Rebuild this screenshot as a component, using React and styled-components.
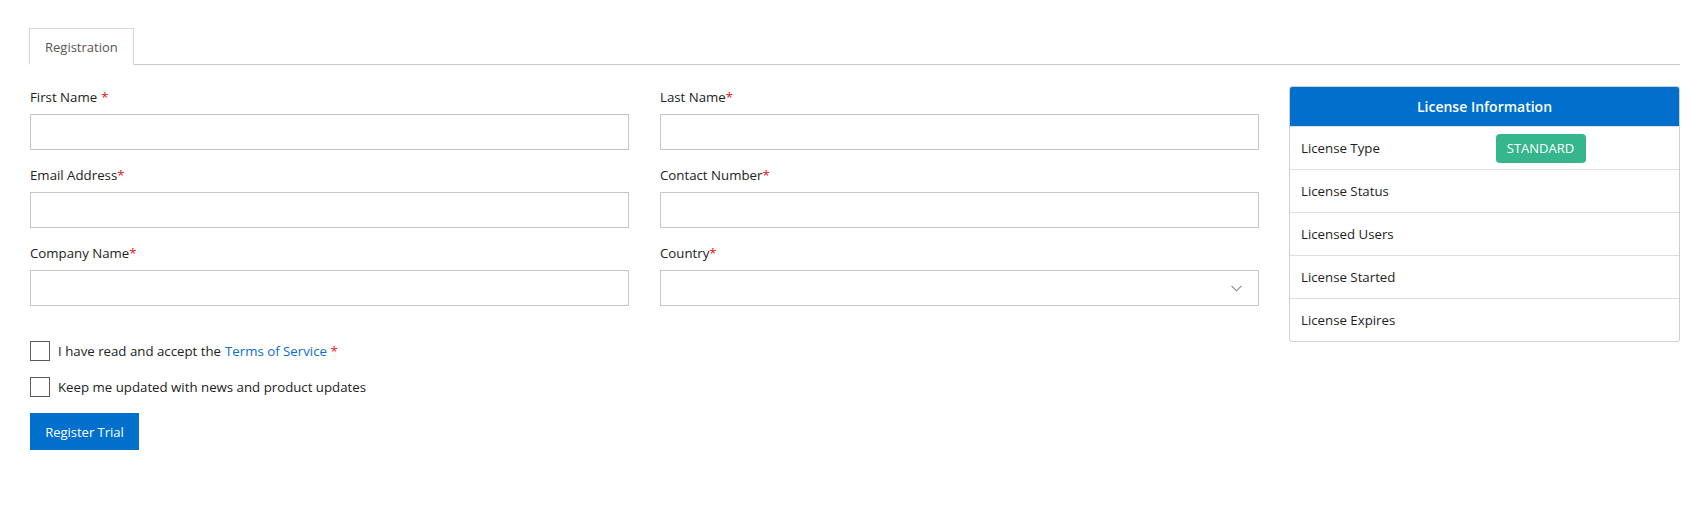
import styled, { createGlobalStyle } from 'styled-components';

const GlobalStyle = createGlobalStyle`
  * { box-sizing: border-box; }
  body {
    margin: 0;
    font-family: "Open Sans", "Noto Sans", Arial, sans-serif;
    font-size: 13.25px;
    color: #212121;
    background: #fff;
  }
`;

const Page = styled.div`
  padding: 28px 27px 40px 29px;
`;

const TabBar = styled.div`
  display: flex;
  border-bottom: 1px solid #c9c9c9;
`;

const Tab = styled.div`
  height: 37px;
  margin-bottom: -1px;
  padding: 0 15px;
  display: flex;
  align-items: center;
  border: 1px solid #d6d6d6;
  border-bottom-color: #fff;
  background: #fff;
  color: #555;
  font-size: 13px;
`;

const Content = styled.div`
  display: grid;
  grid-template-columns: 1fr 391px;
  gap: 30px;
  margin-top: 22px;
  padding-left: 1px;
`;

const FormGrid = styled.div`
  display: grid;
  grid-template-columns: 1fr 1fr;
  column-gap: 31px;
  row-gap: 15px;
`;

const Field = styled.div`
  display: flex;
  flex-direction: column;
  gap: 7px;
`;

const Label = styled.label`
  line-height: 20px;
  color: #222;
`;

const Req = styled.span`
  color: #e4141b;
  margin-left: ${(p) => (p.$spaced ? '4px' : '0')};
`;

const Input = styled.input`
  height: 36px;
  width: 100%;
  border: 1px solid #c6c6c6;
  padding: 0 10px;
  font: inherit;
  outline: none;
`;

const SelectWrap = styled.div`
  position: relative;
  height: 36px;
  border: 1px solid #c6c6c6;
`;

const Chevron = styled.svg`
  position: absolute;
  right: 16px;
  top: 14px;
`;

const Checks = styled.div`
  margin-top: 35px;
  display: flex;
  flex-direction: column;
  gap: 16px;
`;

const CheckRow = styled.label`
  display: flex;
  align-items: center;
  gap: 8px;
  line-height: 20px;
  color: #222;
`;

const Box = styled.span`
  width: 20px;
  height: 20px;
  border: 1px solid #5a5a5a;
  background: #fff;
  flex: none;
`;

const Link = styled.a`
  color: #0a6fc8;
  text-decoration: none;
  margin-left: 4px;
`;

const Button = styled.button`
  margin-top: 16px;
  align-self: flex-start;
  height: 37px;
  width: 109px;
  padding: 0;
  border: none;
  background: #0070cc;
  color: #fff;
  font: inherit;
  font-size: 13px;
`;

const Left = styled.div`
  display: flex;
  flex-direction: column;
`;

const Panel = styled.div`
  margin-top: -1px;
  border: 1px solid #cfcfcf;
  border-radius: 3px;
  overflow: hidden;
  align-self: start;
`;

const PanelHead = styled.div`
  height: 39px;
  background: #0070cc;
  color: #fff;
  display: flex;
  align-items: center;
  justify-content: center;
  font-size: 14px;
  font-weight: 600;
`;

const InfoRow = styled.div`
  display: grid;
  grid-template-columns: 1fr 1fr;
  height: 43px;
  align-items: center;
  border-top: 1px solid #dcdfe3;
  &:first-of-type { border-top: none; }
`;

const Cell = styled.div`
  padding: 0 11px;
  color: #1d1d1d;
`;

const Badge = styled.span`
  display: inline-flex;
  align-items: center;
  justify-content: center;
  width: 90px;
  height: 29px;
  border-radius: 4px;
  background: #35b68c;
  color: #fff;
  font-size: 13px;
`;

const rows = ['License Type', 'License Status', 'Licensed Users', 'License Started', 'License Expires'];

export default function App() {
  return (
    <Page>
      <GlobalStyle />
      <TabBar>
        <Tab>Registration</Tab>
      </TabBar>
      <Content>
        <Left>
          <FormGrid>
            <Field>
              <Label>First Name<Req $spaced>*</Req></Label>
              <Input />
            </Field>
            <Field>
              <Label>Last Name<Req>*</Req></Label>
              <Input />
            </Field>
            <Field>
              <Label>Email Address<Req>*</Req></Label>
              <Input />
            </Field>
            <Field>
              <Label>Contact Number<Req>*</Req></Label>
              <Input />
            </Field>
            <Field>
              <Label>Company Name<Req>*</Req></Label>
              <Input />
            </Field>
            <Field>
              <Label>Country<Req>*</Req></Label>
              <SelectWrap>
                <Chevron width="11" height="7" viewBox="0 0 11 7">
                  <path d="M0.5 0.8 L5.5 5.8 L10.5 0.8" fill="none" stroke="#8a8a8a" strokeWidth="1.1" />
                </Chevron>
              </SelectWrap>
            </Field>
          </FormGrid>
          <Checks>
            <CheckRow>
              <Box />
              <span>
                I have read and accept the<Link href="#">Terms of Service</Link> <Req>*</Req>
              </span>
            </CheckRow>
            <CheckRow>
              <Box />
              <span>Keep me updated with news and product updates</span>
            </CheckRow>
          </Checks>
          <Button>Register Trial</Button>
        </Left>
        <Panel>
          <PanelHead>License Information</PanelHead>
          {rows.map((r, i) => (
            <InfoRow key={r}>
              <Cell>{r}</Cell>
              <Cell>{i === 0 && <Badge>STANDARD</Badge>}</Cell>
            </InfoRow>
          ))}
        </Panel>
      </Content>
    </Page>
  );
}
